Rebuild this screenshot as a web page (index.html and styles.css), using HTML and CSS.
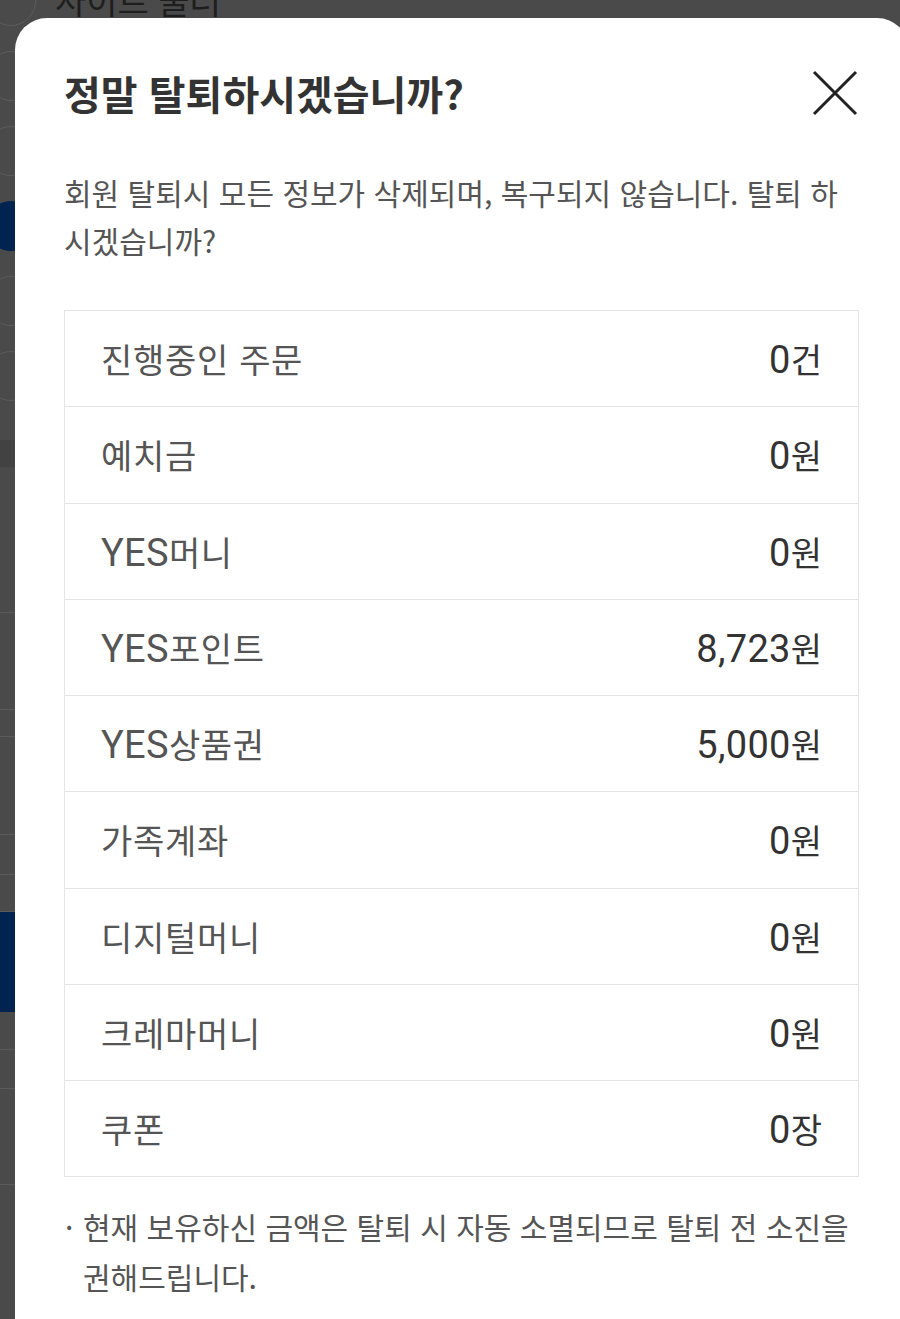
FILE: index.html
```html
<!DOCTYPE html>
<html lang="ko">
<head>
<meta charset="utf-8">
<title>회원 탈퇴</title>
<link rel="stylesheet" href="styles.css">
</head>
<body>
<div class="page">
  <div class="page-head"><span class="page-title">사이트 둘러</span></div>
  <div class="opt opt-first"><span class="dot"></span></div>
  <div class="opt"><span class="dot"></span></div>
  <div class="opt"><span class="dot"></span></div>
  <div class="opt"><span class="dot dot-on"></span></div>
  <div class="opt"><span class="dot"></span></div>
  <div class="opt"><span class="dot"></span></div>
  <div class="band"></div>
  <div class="blk h146"></div>
  <div class="blk h97"></div>
  <div class="blk h27"></div>
  <div class="blk h98"></div>
  <div class="blk h40"></div>
  <div class="blk h37"></div>
  <div class="navy"></div>
  <div class="blk h38"></div>
  <div class="blk h39"></div>
  <div class="blk h96"></div>
  <div class="blk h140"></div>
</div>

<div class="sheet">
  <div class="sheet-head">
    <h1 class="sheet-title">정말 탈퇴하시겠습니까?</h1>
    <button class="close" type="button" aria-label="닫기">
      <svg width="46" height="46" viewBox="0 0 46 46"><path d="M2 2 L44 44 M44 2 L2 44" stroke="#222" stroke-width="3" fill="none"/></svg>
    </button>
  </div>
  <p class="desc">회원 탈퇴시 모든 정보가 삭제되며, 복구되지 않습니다. 탈퇴 하시겠습니까?</p>
  <div class="assets">
    <div class="row"><span class="label">진행중인 주문</span><span class="value"><span class="lat">0</span>건</span></div>
    <div class="row"><span class="label">예치금</span><span class="value"><span class="lat">0</span>원</span></div>
    <div class="row"><span class="label"><span class="lat">YES</span>머니</span><span class="value"><span class="lat">0</span>원</span></div>
    <div class="row"><span class="label"><span class="lat">YES</span>포인트</span><span class="value"><span class="lat">8,723</span>원</span></div>
    <div class="row"><span class="label"><span class="lat">YES</span>상품권</span><span class="value"><span class="lat">5,000</span>원</span></div>
    <div class="row"><span class="label">가족계좌</span><span class="value"><span class="lat">0</span>원</span></div>
    <div class="row"><span class="label">디지털머니</span><span class="value"><span class="lat">0</span>원</span></div>
    <div class="row"><span class="label">크레마머니</span><span class="value"><span class="lat">0</span>원</span></div>
    <div class="row"><span class="label">쿠폰</span><span class="value"><span class="lat">0</span>장</span></div>
  </div>
  <p class="note"><span class="bullet">·</span><span>현재 보유하신 금액은 탈퇴 시 자동 소멸되므로 탈퇴 전 소진을 권해드립니다.</span></p>
</div>
</body>
</html>
```

FILE: styles.css
```css
html, body {
  margin: 0;
  padding: 0;
  width: 900px;
  height: 1319px;
  overflow: hidden;
}
body {
  position: relative;
  background: #4a4a4a;
  font-family: "Noto Sans CJK KR", "Noto Sans", sans-serif;
}

/* dimmed page behind the sheet */
.page {
  display: flex;
  flex-direction: column;
}
.page-head {
  height: 18px;
  overflow: hidden;
  padding-left: 55px;
  position: relative;
  z-index: 1;
}
.page-title {
  display: block;
  font-size: 34px;
  line-height: 34px;
  margin-top: -17px;
  color: #1e1e1e;
}
.opt {
  height: 75px;
  flex: 0 0 75px;
  display: flex;
  align-items: center;
}
.opt-first { margin-top: -55px; }
.dot {
  width: 50px;
  height: 50px;
  margin-left: -14px;
  border-radius: 50%;
  border: 1px solid #5c5c5c;
  box-sizing: border-box;
}
.dot-on {
  background: #002450;
  border-color: #002450;
}
.band {
  height: 27px;
  flex: 0 0 27px;
  background: #424242;
  margin-top: 27px;
}
.blk { border-bottom: 1px solid #5a5a5a; flex: 0 0 auto; }
.h146 { height: 145px; }
.h97 { height: 96px; }
.h27 { height: 26px; }
.h98 { height: 97px; }
.h40 { height: 39px; }
.h37 { height: 36px; }
.h38 { height: 37px; }
.h39 { height: 38px; }
.h96 { height: 95px; }
.h140 { height: 139px; border-bottom: 0; }
.navy {
  height: 100px;
  flex: 0 0 100px;
  background: #00244f;
}

/* bottom sheet */
.sheet {
  position: absolute;
  z-index: 2;
  left: 15px;
  top: 18px;
  width: 894px;
  height: 1340px;
  box-sizing: border-box;
  padding: 51px 49px 0 49px;
  background: #fff;
  border-radius: 32px 32px 0 0;
}
.sheet-head {
  display: flex;
  align-items: center;
  justify-content: space-between;
  height: 48px;
}
.sheet-title {
  margin: 0;
  font-size: 40px;
  line-height: 48px;
  font-weight: 700;
  color: #333;
}
.close {
  border: 0;
  background: none;
  padding: 0;
  margin-right: 2px;
  width: 46px;
  height: 46px;
  display: flex;
}
.desc {
  margin: 51px 0 0 0;
  font-size: 30px;
  line-height: 48px;
  color: #555;
}
.assets {
  margin-top: 46px;
  margin-right: 1px;
  border: 1px solid #e4e4e4;
  border-bottom: 0;
}
.row {
  height: 95.25px;
  border-bottom: 1px solid #e4e4e4;
  display: flex;
  align-items: center;
  justify-content: space-between;
  padding: 0 36px;
  font-size: 34px;
  letter-spacing: 0.7px;
}
.lat {
  font-family: Roboto, "Noto Sans", sans-serif;
  font-size: 38px;
  letter-spacing: 0.3px;
}
.label { color: #555; }
.value { color: #333; letter-spacing: 0; }
.note {
  margin: 24px 0 0 0;
  display: flex;
  font-size: 30px;
  line-height: 50px;
  color: #555;
}
.bullet {
  flex: 0 0 18px;
  margin-left: 1px;
}
```
